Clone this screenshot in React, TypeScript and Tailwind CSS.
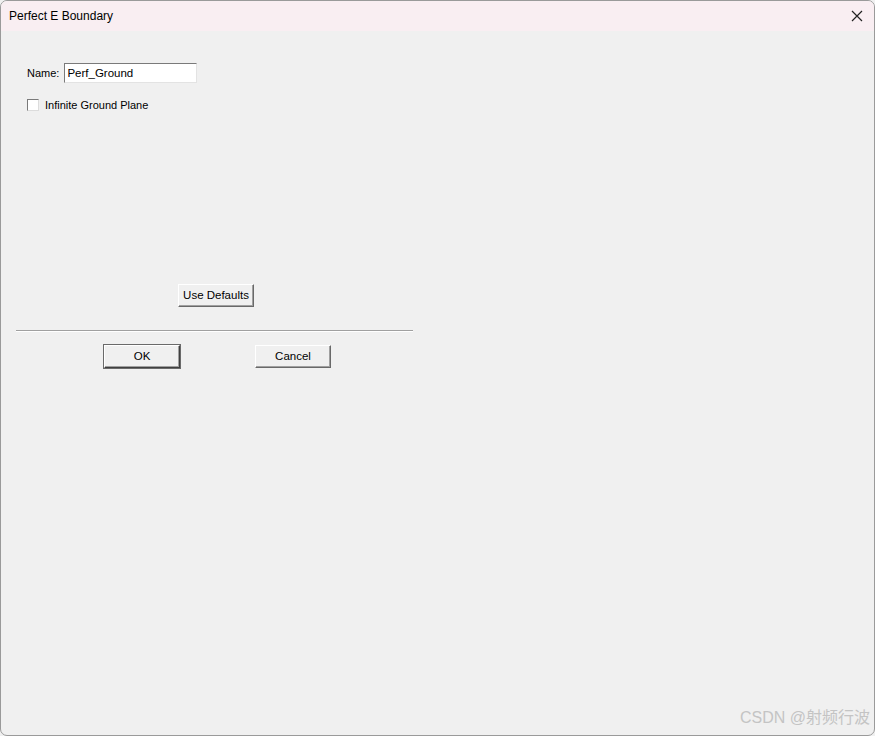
import { useState } from 'react';

function Button({ label, primary }: { label: string; primary?: boolean }) {
  return (
    <button
      className={`w-[76px] h-[23px] bg-[#f0f0f0] text-[11.5px] text-black border border-t-white border-l-white ${
        primary
          ? 'border-r-[#404040] border-b-[#404040] outline outline-1 outline-[#6a6a6a] shadow-[inset_-1px_-1px_0_#a0a0a0]'
          : 'border-r-[#696969] border-b-[#696969] shadow-[inset_-1px_-1px_0_#a0a0a0]'
      }`}
    >
      {label}
    </button>
  );
}

export default function App() {
  const [name, setName] = useState('Perf_Ground');
  const [infinite, setInfinite] = useState(false);

  return (
    <div className="w-[875px] h-[736px] bg-[#f0f0f0] relative overflow-hidden font-['Liberation_Sans',Arial,sans-serif]">
      <div className="h-full flex flex-col border border-[#9a9a9a] rounded-[7px] overflow-hidden">
        {/* title bar */}
        <div className="h-[30px] shrink-0 bg-[#f9eef2] flex items-center justify-between pl-[8px] pr-[10px]">
          <span className="text-[12px] text-black">Perfect E Boundary</span>
          <svg width="12" height="12" viewBox="0 0 12 12" className="mr-[1px]">
            <path d="M1 1L11 11M11 1L1 11" stroke="#222" strokeWidth="1.2" />
          </svg>
        </div>

        {/* body */}
        <div className="flex-1 flex flex-col pl-[26px] pt-[32px]">
          <div className="flex items-center gap-[5px] h-[20px]">
            <span className="text-[11px] text-black">Name:</span>
            <input
              value={name}
              onChange={(e) => setName(e.target.value)}
              className="w-[133px] h-[20px] bg-white text-[11.5px] text-black px-[2px] border border-t-[#7a7a7a] border-l-[#7a7a7a] border-r-[#e3e3e3] border-b-[#e3e3e3] outline-none"
            />
          </div>
          <label className="flex items-center gap-[6px] mt-[14px] h-[16px]">
            <span
              onClick={() => setInfinite(!infinite)}
              className="w-[12px] h-[12px] bg-white border border-t-[#7a7a7a] border-l-[#7a7a7a] border-r-[#dcdcdc] border-b-[#dcdcdc] flex items-center justify-center text-[10px] leading-none"
            >
              {infinite ? '✓' : ''}
            </span>
            <span className="text-[11px] text-black">Infinite Ground Plane</span>
          </label>

          <div className="mt-[169px] pl-[151px]">
            <Button label="Use Defaults" />
          </div>

          <div className="mt-[23px] -ml-[11px] w-[397px] h-[1px] bg-[#a0a0a0] border-b border-white box-content" />

          <div className="mt-[13px] flex gap-[75px] pl-[77px]">
            <Button label="OK" primary />
            <Button label="Cancel" />
          </div>
        </div>
      </div>

      <div className="absolute right-[5px] bottom-[6px] text-[16px] text-[#c4c4c4] font-['Liberation_Sans','Noto_Sans_CJK_SC',sans-serif]">
        CSDN @射频行波
      </div>
    </div>
  );
}
